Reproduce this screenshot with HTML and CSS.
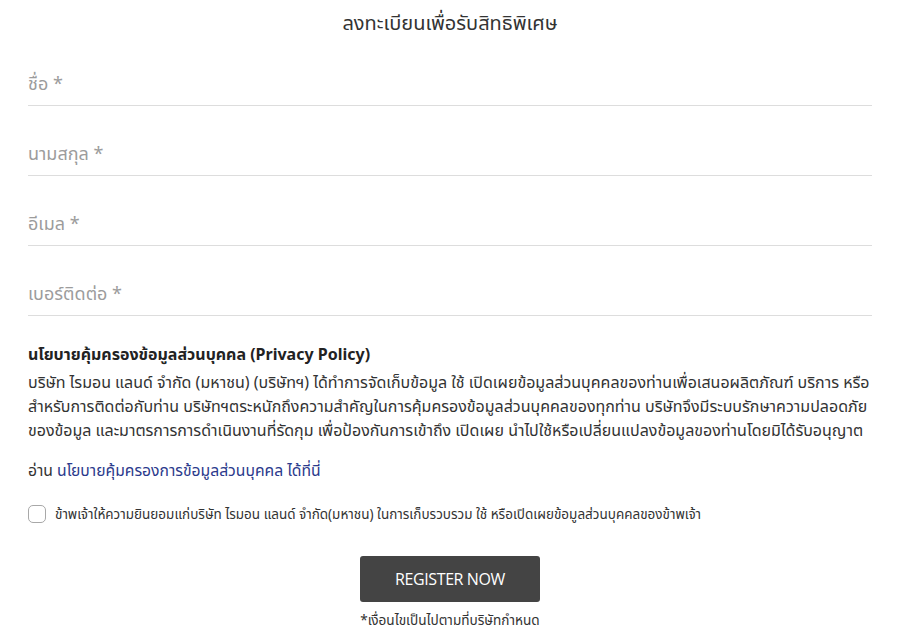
FILE: index.html
```html
<!DOCTYPE html>
<html lang="th">
<head>
<meta charset="utf-8">
<link rel="stylesheet" href="styles.css">
</head>
<body>
<div class="page">
  <h1 class="title">ลงทะเบียนเพื่อรับสิทธิพิเศษ</h1>
  <div class="field"><span class="ph">ชื่อ *</span></div>
  <div class="field"><span class="ph">นามสกุล *</span></div>
  <div class="field"><span class="ph">อีเมล *</span></div>
  <div class="field"><span class="ph">เบอร์ติดต่อ *</span></div>
  <div class="policy">
    <h2 class="policy-title">นโยบายคุ้มครองข้อมูลส่วนบุคคล (Privacy Policy)</h2>
    <p class="policy-text">บริษัท ไรมอน แลนด์ จำกัด (มหาชน) (บริษัทฯ) ได้ทำการจัดเก็บข้อมูล ใช้ เปิดเผยข้อมูลส่วนบุคคลของท่านเพื่อเสนอผลิตภัณฑ์ บริการ หรือ สำหรับการติดต่อกับท่าน บริษัทฯตระหนักถึงความสำคัญในการคุ้มครองข้อมูลส่วนบุคคลของทุกท่าน บริษัทจึงมีระบบรักษาความปลอดภัย ของข้อมูล และมาตรการการดำเนินงานที่รัดกุม เพื่อป้องกันการเข้าถึง เปิดเผย นำไปใช้หรือเปลี่ยนแปลงข้อมูลของท่านโดยมิได้รับอนุญาต</p>
    <p class="read">อ่าน <a class="link">นโยบายคุ้มครองการข้อมูลส่วนบุคคล ได้ที่นี่</a></p>
  </div>
  <label class="consent"><span class="box"></span><span>ข้าพเจ้าให้ความยินยอมแก่บริษัท ไรมอน แลนด์ จำกัด(มหาชน) ในการเก็บรวบรวม ใช้ หรือเปิดเผยข้อมูลส่วนบุคคลของข้าพเจ้า</span></label>
  <div class="actions">
    <button class="btn">REGISTER NOW</button>
    <p class="note">*เงื่อนไขเป็นไปตามที่บริษัทกำหนด</p>
  </div>
</div>
</body>
</html>
```
FILE: styles.css
```css
* { box-sizing: border-box; }
body { margin: 0; background: #fff; font-family: "Noto Sans", "Noto Sans Thai", "Open Sans", sans-serif; color: #333; }
.page { padding: 8px 29px 0 28px; }
.title { margin: 0; text-align: center; font-size: 20px; font-weight: 400; line-height: 30px; color: #333; }
.field { height: 70px; border-bottom: 1px solid #ddd; display: flex; align-items: flex-end; padding-bottom: 10px; }
.field:first-of-type { height: 68px; }
.ph { font-size: 18px; color: #9c9c9c; line-height: 24px; }
.policy { padding-top: 26px; }
.policy-title { margin: 0; font-size: 16px; font-weight: 700; line-height: 24px; color: #222; }
.policy-text { margin: 4px 0 0; font-size: 16px; line-height: 24px; color: #333; }
.read { margin: 16px 0 0; font-size: 15.7px; line-height: 24px; }
.link { color: #2b3a8c; }
.consent { display: flex; align-items: center; gap: 9px; margin-top: 22px; font-size: 13.5px; line-height: 20px; color: #333; }
.box { width: 18px; height: 18px; border: 1px solid #a8a8a8; border-radius: 5px; flex: none; }
.actions { display: flex; flex-direction: column; align-items: center; margin-top: 32px; }
.btn { width: 180px; height: 46px; background: #444; color: #fff; border: 0; border-radius: 3px; font-family: "Open Sans", sans-serif; font-size: 16px; letter-spacing: -0.4px; }
.note { margin: 8px 0 0; font-size: 13.6px; line-height: 20px; color: #333; }
```
